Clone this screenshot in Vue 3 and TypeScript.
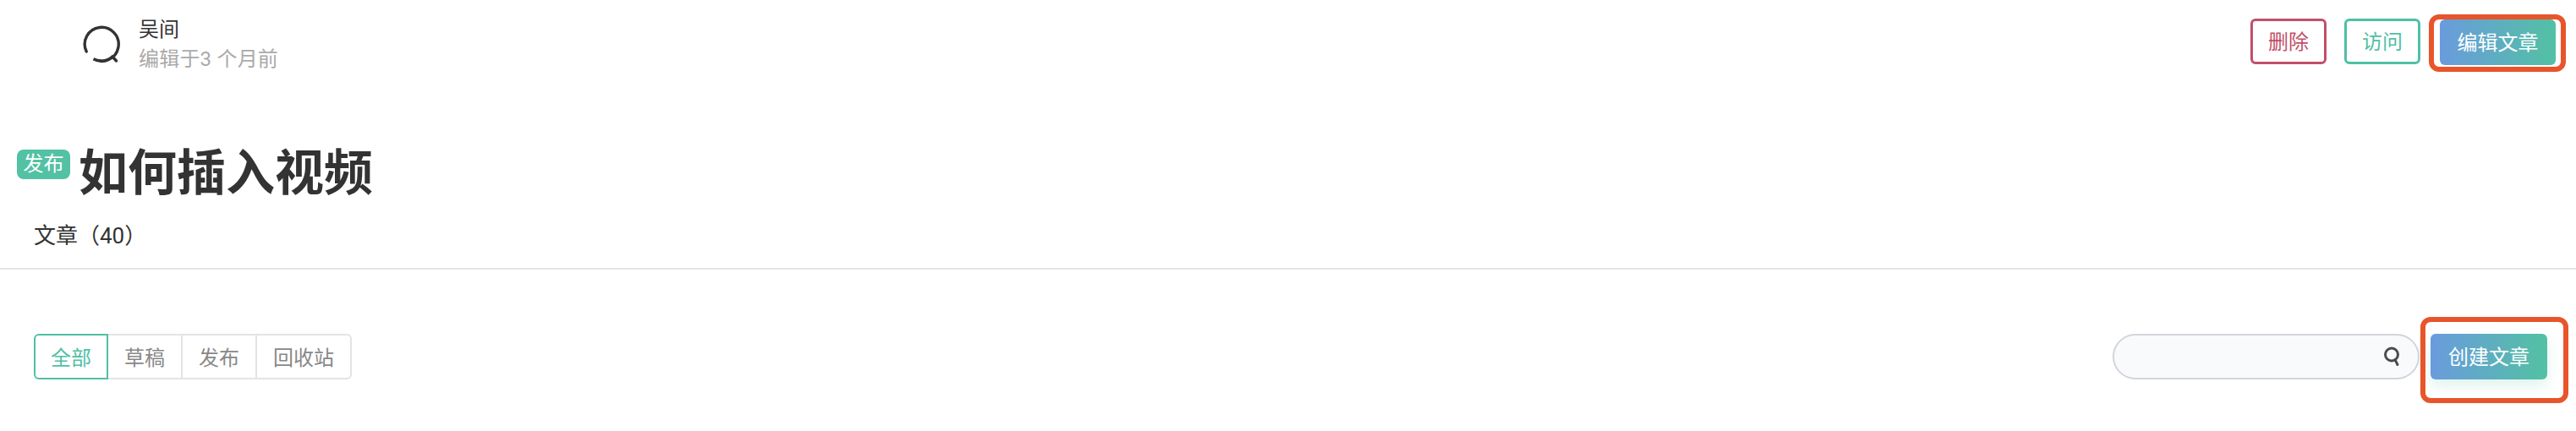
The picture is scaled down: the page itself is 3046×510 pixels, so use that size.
<script setup lang="ts">
import { ref } from 'vue'

const tabs = ['全部', '草稿', '发布', '回收站']
const activeTab = ref('全部')
const keyword = ref('')
</script>

<template>
  <div class="page">
    <header class="top">
      <div class="author">
        <svg class="avatar" width="46" height="46" viewBox="0 0 46 46" fill="none">
          <path d="M4.2 31A20 20 0 1 1 12.5 39.8A20 20 0 0 0 35 37" stroke="#333" stroke-width="3.4" stroke-linecap="round" />
          <path d="M35 37L39.5 42" stroke="#333" stroke-width="3.4" stroke-linecap="round" />
        </svg>
        <div class="author-text">
          <div class="name">吴间</div>
          <div class="time">编辑于3 个月前</div>
        </div>
      </div>
      <div class="actions">
        <button class="btn outline danger">删除</button>
        <button class="btn outline visit">访问</button>
        <div class="marked">
          <button class="btn primary edit">编辑文章</button>
          <span class="mark mark-edit"></span>
        </div>
      </div>
    </header>

    <div class="title-row">
      <span class="tag">发布</span>
      <h1 class="title">如何插入视频</h1>
    </div>
    <div class="count">文章（40）</div>

    <div class="toolbar">
      <div class="tabs">
        <button
          v-for="t in tabs"
          :key="t"
          :class="['tab', { active: activeTab === t }]"
          @click="activeTab = t"
        >
          {{ t }}
        </button>
      </div>
      <div class="tools">
        <div class="search">
          <input v-model="keyword" class="search-input" />
          <svg class="search-icon" width="22" height="26" viewBox="0 0 22 26" fill="none">
            <circle cx="10" cy="9.5" r="7.5" stroke="#4b4b4b" stroke-width="3" />
            <path d="M14 15.5L17 21.5" stroke="#4b4b4b" stroke-width="3" stroke-linecap="round" />
          </svg>
        </div>
        <div class="marked">
          <button class="btn primary create">创建文章</button>
          <span class="mark mark-create"></span>
        </div>
      </div>
    </div>
  </div>
</template>

<style scoped>
.page {
  width: 3046px;
  height: 510px;
  overflow: hidden;
  background: #fff;
  font-family: Roboto, 'Noto Sans CJK SC', sans-serif;
  color: #333;
}

.top {
  display: flex;
  align-items: flex-start;
  justify-content: space-between;
  padding: 22px 24px 0 98px;
}

.author {
  display: flex;
  align-items: flex-start;
}

.avatar {
  margin: 8px 20px 0 0;
  flex: none;
}

.author-text {
  font-size: 24px;
  line-height: 34px;
  margin-top: -4px;
}

.name {
  color: #333;
}

.time {
  margin-top: 1px;
  color: #aaa;
  letter-spacing: 0.2px;
}

.actions {
  display: flex;
  align-items: flex-start;
}

.btn {
  height: 54px;
  box-sizing: border-box;
  border-radius: 6px;
  font-family: inherit;
  font-size: 24px;
  padding: 0 0 3px;
  cursor: pointer;
}

.outline {
  width: 90px;
  background: #fff;
  border: 3px solid currentColor;
}

.danger {
  color: #c24f68;
  margin-right: 21px;
}

.visit {
  color: #4fc0a4;
  margin-right: 23px;
}

.primary {
  border: 0;
  color: #fff;
  background: linear-gradient(90deg, #6a9bdd, #52c1a3);
}

.edit {
  width: 137px;
  display: block;
  margin-top: 1px;
}

.marked {
  position: relative;
}

/* красные рамки-пометки поверх кнопок */
.mark {
  position: absolute;
  border: 6px solid #e8552a;
  border-radius: 12px;
  pointer-events: none;
}

.mark-edit {
  inset: -5px -12px -8px -13px;
}

.mark-create {
  inset: -20px -25px -28px -12px;
}

.title-row {
  display: flex;
  align-items: flex-start;
  margin-top: 86px;
  padding-left: 20px;
}

.tag {
  width: 63px;
  height: 35px;
  margin-top: 4px;
  background: #53c1a4;
  border-radius: 8px;
  color: #fff;
  font-size: 24px;
  line-height: 35px;
  text-align: center;
}

.title {
  margin: -8px 0 0 10px;
  font-size: 58px;
  line-height: 80px;
  font-weight: 700;
  color: #333;
}

.count {
  margin-top: 15px;
  padding: 0 40px 19px;
  font-size: 26px;
  line-height: 38px;
  color: #333;
  border-bottom: 2px solid #e5e5e5;
}

.toolbar {
  display: flex;
  align-items: flex-start;
  justify-content: space-between;
  padding: 76px 34px 0 40px;
}

.tabs {
  display: flex;
}

.tab {
  height: 54px;
  padding: 0 19px 2px;
  box-sizing: border-box;
  background: #fff;
  border: 2px solid #e4e4e4;
  border-left-width: 0;
  font-family: inherit;
  font-size: 24px;
  color: #888;
  white-space: nowrap;
  cursor: pointer;
}

.tab:first-child {
  border-radius: 6px 0 0 6px;
}

.tab:last-child {
  border-radius: 0 6px 6px 0;
}

.tab.active {
  width: 88px;
  padding: 0 0 2px;
  border: 2px solid #4fc0a4;
  color: #4fc0a4;
}

.tools {
  display: flex;
  align-items: flex-start;
  gap: 13px;
}

.search {
  position: relative;
  width: 363px;
  height: 54px;
}

.search-input {
  width: 100%;
  height: 100%;
  box-sizing: border-box;
  padding: 0 60px 0 24px;
  background: #f9fafb;
  border: 2px solid #d1d5db;
  border-radius: 27px;
  outline: none;
  font-size: 24px;
}

.search-icon {
  position: absolute;
  right: 21px;
  top: 15px;
}

.create {
  width: 138px;
  display: block;
  box-shadow: 0 8px 16px rgba(82, 193, 163, 0.18);
}
</style>
